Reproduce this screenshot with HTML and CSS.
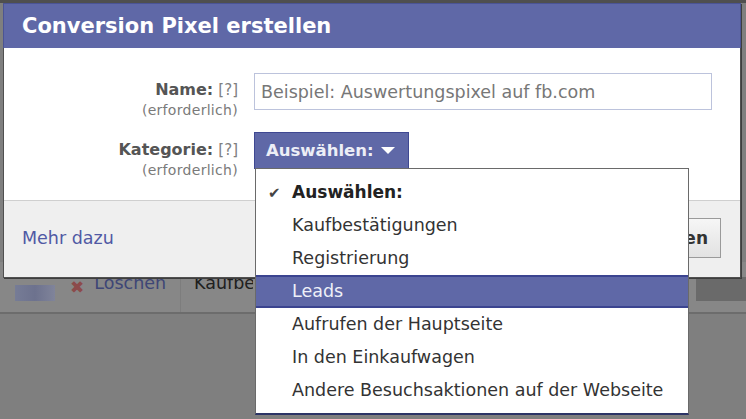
FILE: index.html
```html
<!DOCTYPE html>
<html lang="de">
<head>
    <meta charset="UTF-8">
    <title>Conversion Pixel erstellen</title>
    <link rel="stylesheet" href="styles.css">
</head>
<body>
    <div class="topstrip"></div>
    <div class="page">
        <div class="pixel-row">
            <div class="blur"></div>
            <span class="del-icon">&#10006;</span>
            <span class="del-link">Löschen</span>
            <span class="cell">Kaufbestätigungen</span>
            <div class="cell-end"></div>
        </div>
    </div>

    <div class="dialog">
        <div class="dialog-header">Conversion Pixel erstellen</div>
        <div class="dialog-body">
            <div class="form-row">
                <div class="label">
                    <div><b>Name:</b> <span class="help">[?]</span></div>
                    <div class="req">(erforderlich)</div>
                </div>
                <input class="text-input" type="text" placeholder="Beispiel: Auswertungspixel auf fb.com">
            </div>
            <div class="form-row">
                <div class="label label-btn">
                    <div><b>Kategorie:</b> <span class="help">[?]</span></div>
                    <div class="req">(erforderlich)</div>
                </div>
                <div class="select">
                    <div class="select-btn">Auswählen: <span class="arrow"></span></div>
                    <ul class="menu">
                        <li class="checked"><span class="check">&#10004;</span>Auswählen:</li>
                        <li>Kaufbestätigungen</li>
                        <li>Registrierung</li>
                        <li class="active">Leads</li>
                        <li>Aufrufen der Hauptseite</li>
                        <li>In den Einkaufwagen</li>
                        <li>Andere Besuchsaktionen auf der Webseite</li>
                    </ul>
                </div>
            </div>
        </div>
        <div class="dialog-footer">
            <a href="#" class="more">Mehr dazu</a>
            <button class="btn">Erstellen</button>
        </div>
    </div>
</body>
</html>
```
FILE: styles.css
```css
body {
    margin: 0;
    font-family: "DejaVu Sans", "Liberation Sans", sans-serif;
    background: #7f7f7f;
    height: 419px;
    overflow: hidden;
}
.topstrip {
    height: 3px;
    background: #4f4f4f;
}
.page {
    padding-top: 259px;
}
.pixel-row {
    display: flex;
    align-items: flex-start;
    height: 50px;
    background: #878787;
    border-bottom: 2px solid #6c6c6c;
    font-size: 17.5px;
    line-height: 24px;
}
.blur {
    width: 40px;
    height: 16px;
    margin: 23px 0 0 15px;
    background: linear-gradient(90deg, #767c96, #6d728e 50%, #80849a);
}
.del-icon {
    margin: 13px 0 0 15px;
    color: #8c4b4b;
    font-size: 17px;
}
.del-link {
    margin: 9px 0 0 10px;
    color: #3e4676;
}
.cell {
    width: 59px;
    margin-left: 14px;
    padding: 9px 0 17px 13px;
    border-left: 1px solid #7d7d7d;
    color: #202020;
    white-space: nowrap;
    overflow: hidden;
}
.cell-end {
    margin-left: auto;
    margin-top: 15px;
    width: 50px;
    height: 24px;
    background: #6a6a6a;
}

/* dialog */
.dialog {
    position: absolute;
    left: 3px;
    top: 3px;
    width: 736px;
    border: 1px solid #505050;
    border-top: none;
    background: #fff;
    box-shadow: 1px 1px 0 #3e3e3e;
}
.dialog-header {
    height: 44px;
    line-height: 44px;
    padding-left: 18px;
    background: #5f68a7;
    border: 1px solid #4b5495;
    border-bottom: none;
    margin: 0 -1px;
    color: #fff;
    font-size: 21px;
    font-weight: bold;
}
.dialog-body {
    padding: 25px 0 21px;
}
.form-row {
    display: flex;
    align-items: flex-start;
    gap: 16px;
}
.form-row + .form-row {
    margin-top: 13px;
}
.label {
    width: 234px;
    text-align: right;
    padding-top: 7px;
    font-size: 16px;
    line-height: 19px;
    color: #555;
}
.label-btn {
    padding-top: 8px;
}
.help {
    color: #808080;
    font-size: 15px;
}
.req {
    margin-top: 2px;
    font-size: 14px;
    letter-spacing: 0.3px;
    line-height: 17px;
    color: #7a7a7a;
}
.text-input {
    box-sizing: border-box;
    width: 458px;
    height: 37px;
    margin: 0;
    padding: 0 6px;
    border: 1px solid #bcc3dc;
    font-family: inherit;
    font-size: 17.5px;
    color: #333;
    outline: none;
}
.text-input::placeholder {
    color: #777;
}
.select {
    position: relative;
}
.select-btn {
    box-sizing: border-box;
    height: 37px;
    width: 155px;
    padding-left: 11px;
    line-height: 35px;
    background: #5f68a7;
    border: 1px solid #3f4892;
    color: #eceef6;
    font-size: 16.5px;
    font-weight: bold;
}
.arrow {
    display: inline-block;
    margin-left: 2px;
    vertical-align: 2px;
    border-left: 7px solid transparent;
    border-right: 7px solid transparent;
    border-top: 7px solid #fff;
}
.menu {
    position: absolute;
    left: 1px;
    top: 36px;
    width: 434px;
    box-sizing: border-box;
    margin: 0;
    padding: 7px 0 6px;
    list-style: none;
    background: #fff;
    border: 1px solid #6a6a6a;
    border-bottom: 2px solid #2c3466;
    z-index: 2;
}
.menu li {
    box-sizing: border-box;
    height: 33px;
    line-height: 33px;
    padding-left: 36px;
    font-size: 17.5px;
    color: #333;
}
.menu .checked {
    padding-left: 12px;
    font-size: 17px;
    font-weight: bold;
    color: #222;
}
.check {
    display: inline-block;
    width: 24px;
    font-size: 15px;
    color: #444;
}
.menu .active {
    background: #5f68a7;
    border-top: 2px solid #3b4490;
    border-bottom: 2px solid #3b4490;
    line-height: 29px;
    color: #eef0f8;
}
.dialog-footer {
    display: flex;
    align-items: center;
    justify-content: space-between;
    box-sizing: border-box;
    height: 77px;
    padding: 0 19px 2px 18px;
    background: #efefef;
    border-top: 1px solid #cfcfcf;
}
.more {
    color: #5059a4;
    font-size: 17.5px;
    text-decoration: none;
}
.btn {
    height: 40px;
    padding: 0 12px;
    background: linear-gradient(#f6f6f6, #e2e2e2);
    border: 1px solid #9a9a9a;
    font-family: inherit;
    font-size: 17px;
    font-weight: bold;
    color: #333;
}
```
